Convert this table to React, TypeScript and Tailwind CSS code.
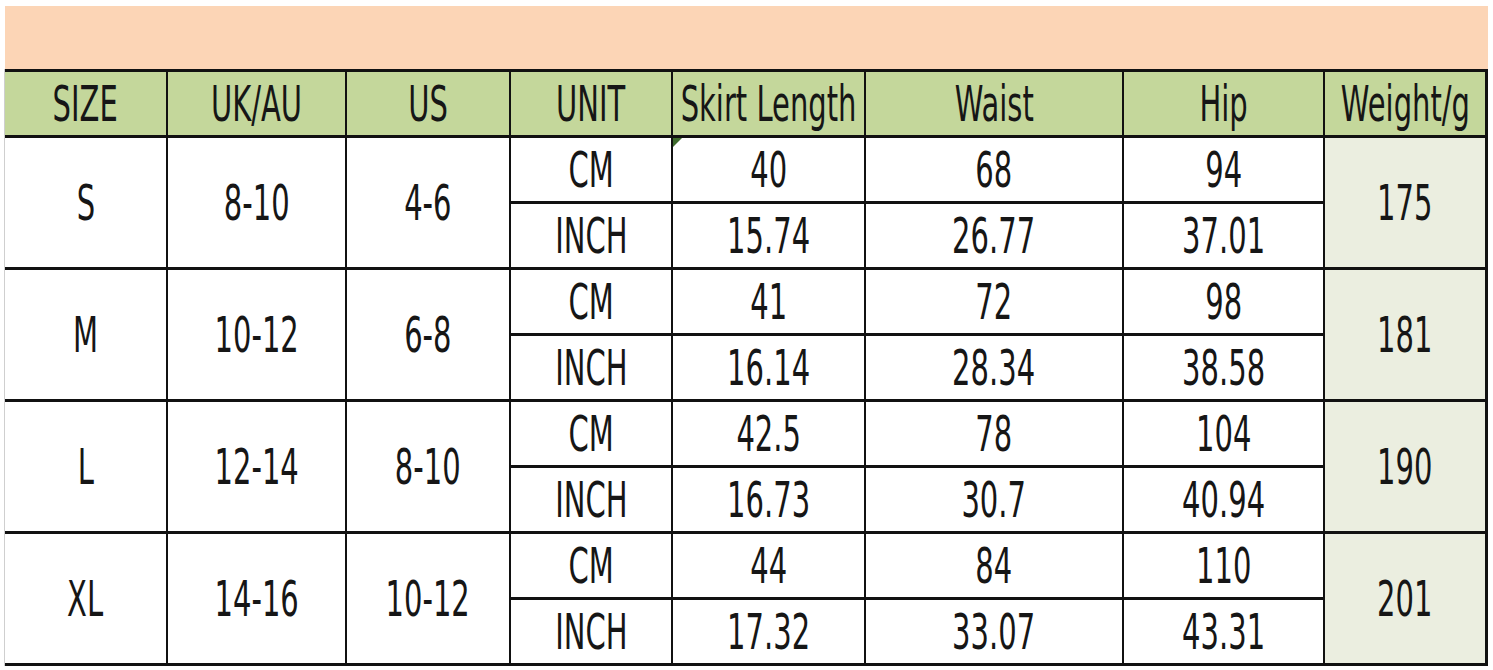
import React from 'react';

const headers = ['SIZE', 'UK/AU', 'US', 'UNIT', 'Skirt Length', 'Waist', 'Hip', 'Weight/g'];

const sizes = [
  { size: 'S', uk: '8-10', us: '4-6', cm: ['40', '68', '94'], inch: ['15.74', '26.77', '37.01'], weight: '175' },
  { size: 'M', uk: '10-12', us: '6-8', cm: ['41', '72', '98'], inch: ['16.14', '28.34', '38.58'], weight: '181' },
  { size: 'L', uk: '12-14', us: '8-10', cm: ['42.5', '78', '104'], inch: ['16.73', '30.7', '40.94'], weight: '190' },
  { size: 'XL', uk: '14-16', us: '10-12', cm: ['44', '84', '110'], inch: ['17.32', '33.07', '43.31'], weight: '201' },
];

const Txt: React.FC<{ children: React.ReactNode }> = ({ children }) => (
  <span className="inline-block shrink-0 whitespace-nowrap scale-x-[0.58] text-[50px] leading-none text-[#161616] [font-family:'DejaVu_Sans',sans-serif]">
    {children}
  </span>
);

const cell = 'flex items-center justify-center overflow-visible bg-white';

export default function App() {
  return (
    <div className="w-[1493px] h-[670px] bg-white pt-[6px] pl-[4px] overflow-hidden">
      <div className="w-[1483px] h-[63px] bg-[#fcd5b6] ml-[1px]" />
      <div className="border-l border-[#cfcfcf] w-[1484px]">
        <div className="grid grid-cols-[161px_177px_162px_160px_191px_256px_199px_160px] grid-rows-[63px_repeat(8,63px)] gap-x-[2px] gap-y-[3px] bg-[#111] py-[3px] pr-[2px] w-[1483px]">
          {headers.map((h) => (
            <div key={h} className="flex items-center justify-center bg-[#c4d79b]">
              <Txt>{h}</Txt>
            </div>
          ))}
          {sizes.map((s, i) => (
            <React.Fragment key={s.size}>
              <div className={`${cell} row-span-2`}>
                <Txt>{s.size}</Txt>
              </div>
              <div className={`${cell} row-span-2`}>
                <Txt>{s.uk}</Txt>
              </div>
              <div className={`${cell} row-span-2`}>
                <Txt>{s.us}</Txt>
              </div>
              <div className={cell}>
                <Txt>CM</Txt>
              </div>
              {s.cm.map((v, j) => (
                <div key={j} className={`${cell} relative`}>
                  {i === 0 && j === 0 && (
                    <svg className="absolute left-0 top-0" width="9" height="9" viewBox="0 0 9 9">
                      <polygon points="0,0 9,0 0,9" fill="#3f6b2e" />
                    </svg>
                  )}
                  <Txt>{v}</Txt>
                </div>
              ))}
              <div className="flex items-center justify-center row-span-2 bg-[#ebeee0]">
                <Txt>{s.weight}</Txt>
              </div>
              <div className={cell}>
                <Txt>INCH</Txt>
              </div>
              {s.inch.map((v, j) => (
                <div key={j} className={cell}>
                  <Txt>{v}</Txt>
                </div>
              ))}
            </React.Fragment>
          ))}
        </div>
      </div>
    </div>
  );
}
